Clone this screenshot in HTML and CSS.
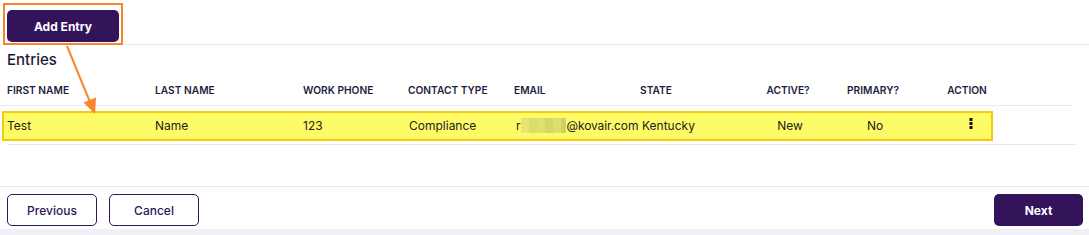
FILE: index.html
```html
<html>

<head>
    <link rel="stylesheet" href="styles.css">
</head>

<body>
    <div class="page">
        <div class="topbar">
            <button class="btn btn-solid add-btn">Add Entry</button>
        </div>
        <div class="content">
            <div class="title">Entries</div>
            <div class="grid head">
                <div>FIRST NAME</div>
                <div>LAST NAME</div>
                <div>WORK PHONE</div>
                <div>CONTACT TYPE</div>
                <div>EMAIL</div>
                <div>STATE</div>
                <div class="c">ACTIVE?</div>
                <div class="c">PRIMARY?</div>
                <div class="c">ACTION</div>
            </div>
            <div class="grid row">
                <div>Test</div>
                <div>Name</div>
                <div>123</div>
                <div class="shift">Compliance</div>
                <div class="email">r<span class="blur"></span>@kovair.com</div>
                <div class="state">Kentucky</div>
                <div class="c">New</div>
                <div class="c">No</div>
                <div class="c">
                    <svg class="dots" width="4" height="11" viewBox="0 0 4 11">
                        <rect x="0.5" y="0" width="3" height="3" fill="#111"/>
                        <rect x="0.5" y="4" width="3" height="3" fill="#111"/>
                        <rect x="0.5" y="8" width="3" height="3" fill="#111"/>
                    </svg>
                </div>
            </div>
        </div>
        <div class="footer">
            <button class="btn btn-outline">Previous</button>
            <button class="btn btn-outline">Cancel</button>
            <span class="spacer"></span>
            <button class="btn btn-solid next-btn">Next</button>
        </div>
        <div class="bottom-strip"></div>

        <!-- annotations on the screenshot -->
        <div class="mark-box"></div>
        <div class="mark-row"></div>
        <svg class="mark-arrow" width="1089" height="235">
            <line x1="67" y1="46" x2="90" y2="102" stroke="#f7852c" stroke-width="2"/>
            <polygon points="95,114 83.5,102.5 96,97.5" fill="#f7852c"/>
        </svg>
    </div>
</body>

</html>
```

FILE: styles.css
```css
body {
    margin: 0;
    font-family: Inter, "Noto Sans", sans-serif;
    background: #ffffff;
    color: #222222;
}

.page {
    position: relative;
    width: 1089px;
    height: 235px;
    overflow: hidden;
}

.topbar {
    padding: 10px 7px 2px;
    border-bottom: 1px solid #e9e7f4;
}

.btn {
    height: 32px;
    border-radius: 5px;
    font-family: Inter, "Noto Sans", sans-serif;
    font-size: 12px;
    cursor: pointer;
    padding: 0;
}

.btn-solid {
    background: #33145b;
    color: #ffffff;
    border: none;
    font-weight: 700;
}

.btn-outline {
    width: 90px;
    background: #ffffff;
    color: #2d1559;
    border: 1px solid #33145b;
    font-weight: 500;
}

.add-btn {
    width: 112px;
}

.next-btn {
    width: 89px;
}

.content {
    padding-bottom: 41px;
}

.title {
    margin: 5px 7px 0;
    font-size: 15px;
    line-height: 20px;
    font-weight: 500;
    color: #1b1a38;
}

.grid {
    display: grid;
    grid-template-columns: 148px 148px 105px 106px 126px 104px 88px 82px 106px;
    width: 1066px;
    padding-left: 7px;
    border-bottom: 1px solid #e9e7f4;
    white-space: nowrap;
}

.head {
    padding-top: 13px;
    padding-bottom: 8px;
    font-size: 10.2px;
    line-height: 14px;
    font-weight: 600;
    color: #1e1d3d;
}

.row {
    margin-left: 7px;
    padding-left: 0;
    width: 1069px;
    padding-top: 12px;
    padding-bottom: 10px;
    font-size: 12px;
    line-height: 16px;
    position: relative;
    z-index: 2;
}

.c {
    text-align: center;
}

.row .c {
    padding-left: 4px;
}

.row .shift {
    margin-left: 1px;
}

.row .email {
    margin-left: 2px;
    letter-spacing: -0.1px;
}

.row .state {
    margin-left: 2px;
}

.blur {
    display: inline-block;
    width: 45px;
    height: 15px;
    margin-left: 1px;
    vertical-align: -3px;
    background:
        linear-gradient(90deg, #e6e672 0 8px, #dcdc6a 8px 16px, #e0e06e 16px 24px, #d6d666 24px 32px, #dede70 32px 40px, #cfcf62 40px 45px);
}

.dots {
    vertical-align: -1px;
    margin-left: 4px;
}

.footer {
    display: flex;
    gap: 12px;
    border-top: 1px solid #e9e7f4;
    padding: 7px 6px 3px 7px;
}

.spacer {
    flex: 1;
}

.bottom-strip {
    height: 6px;
    background: #f1f0f8;
}

.mark-box {
    position: absolute;
    left: 3px;
    top: 3px;
    width: 116px;
    height: 38px;
    border: 2px solid #f7852c;
}

.mark-row {
    position: absolute;
    left: 2px;
    top: 111px;
    width: 987px;
    height: 26px;
    background: #fdfc66;
    border: 2px solid #f6c90e;
    z-index: 1;
}

.mark-arrow {
    position: absolute;
    left: 0;
    top: 0;
    z-index: 3;
    pointer-events: none;
}
```
